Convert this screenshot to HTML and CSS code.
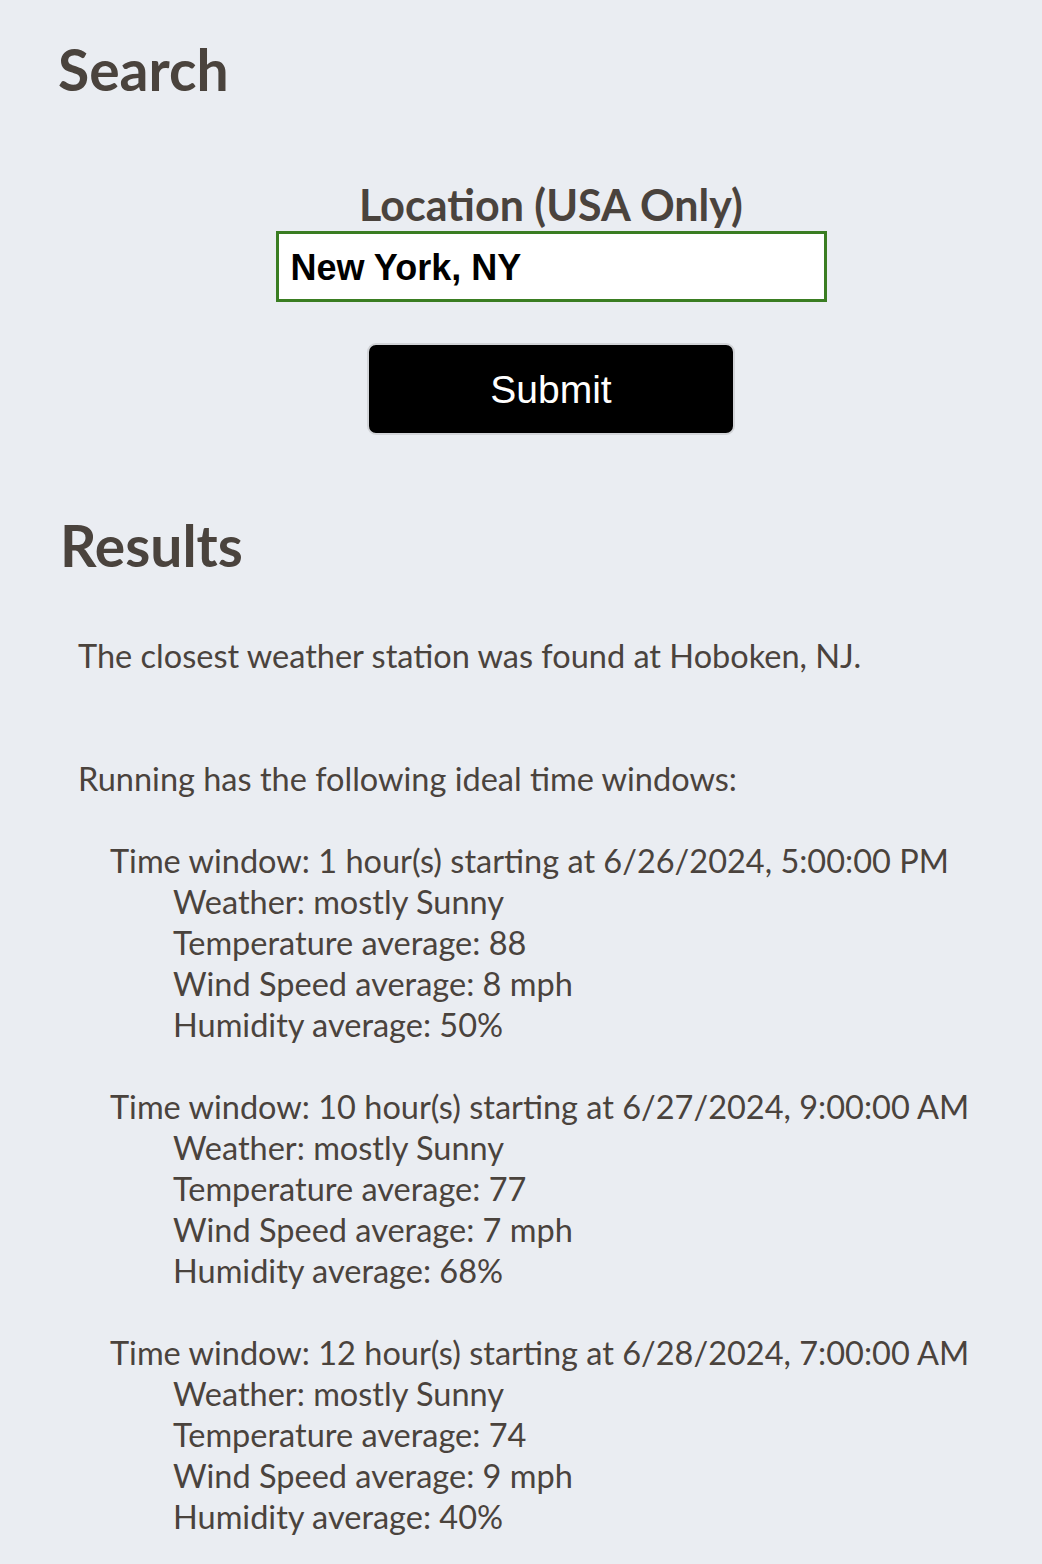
FILE: index.html
```html
<!DOCTYPE html>
<html lang="en">
<head>
<meta charset="utf-8">
<title>Weather Windows</title>
<link rel="stylesheet" href="styles.css">
</head>
<body>
<main class="page">
  <section class="search">
    <h1 class="title title-search">Search</h1>
    <form class="search-form">
      <label class="field-label" for="loc">Location (USA Only)</label>
      <input class="field-input" id="loc" type="text" value="New York, NY">
      <button class="submit" type="button">Submit</button>
    </form>
  </section>
  <section class="results">
    <h1 class="title">Results</h1>
    <div class="results-body">
      <p class="station">The closest weather station was found at Hoboken, NJ.</p>
      <p class="intro">Running has the following ideal time windows:</p>
      <ul class="windows">
        <li class="window">
          <div class="window-head">Time window: 1 hour(s) starting at 6/26/2024, 5:00:00 PM</div>
          <ul class="details">
            <li>Weather: mostly Sunny</li>
            <li>Temperature average: 88</li>
            <li>Wind Speed average: 8 mph</li>
            <li>Humidity average: 50%</li>
          </ul>
        </li>
        <li class="window">
          <div class="window-head">Time window: 10 hour(s) starting at 6/27/2024, 9:00:00 AM</div>
          <ul class="details">
            <li>Weather: mostly Sunny</li>
            <li>Temperature average: 77</li>
            <li>Wind Speed average: 7 mph</li>
            <li>Humidity average: 68%</li>
          </ul>
        </li>
        <li class="window">
          <div class="window-head">Time window: 12 hour(s) starting at 6/28/2024, 7:00:00 AM</div>
          <ul class="details">
            <li>Weather: mostly Sunny</li>
            <li>Temperature average: 74</li>
            <li>Wind Speed average: 9 mph</li>
            <li>Humidity average: 40%</li>
          </ul>
        </li>
      </ul>
    </div>
  </section>
</main>
</body>
</html>
```

FILE: styles.css
```css
html, body {
  margin: 0;
  padding: 0;
  background: #eaedf2;
}

body {
  font-family: Lato, "Open Sans", sans-serif;
  color: #4a433d;
}

.page {
  padding: 35px 0 40px 60px;
}

.title {
  margin: 0;
  font-size: 57px;
  font-weight: 700;
  line-height: 1.2;
  color: #4a433d;
}

.title-search {
  margin-left: -2px;
}

.search-form {
  display: flex;
  flex-direction: column;
  align-items: center;
  margin-top: 75px;
}

.field-label {
  font-size: 43px;
  font-weight: 700;
  line-height: 53px;
}

.field-input {
  box-sizing: border-box;
  width: 551px;
  height: 71px;
  margin: 0;
  padding: 2px 12px 0;
  border: 3px solid #3a7d22;
  border-radius: 0;
  background: #ffffff;
  color: #000000;
  font-family: "Liberation Sans", Arial, sans-serif;
  font-size: 36px;
  font-weight: 700;
  outline: none;
}

.submit {
  box-sizing: border-box;
  width: 368px;
  height: 92px;
  margin-top: 41px;
  border: 2px solid #d2d4d8;
  border-radius: 9px;
  background: #000000;
  color: #ffffff;
  font-family: "Liberation Sans", Arial, sans-serif;
  font-size: 39px;
  font-weight: 400;
  padding: 2px 0 0;
}

.results {
  margin-top: 76px;
}

.results-body {
  padding-left: 18px;
  font-size: 32.5px;
  line-height: 41px;
}

.station {
  margin: 55px 0 0;
}

.intro {
  margin: 82px 0 0;
}

.windows {
  list-style: none;
  margin: 41px 0 0;
  padding: 0 0 0 32px;
}

.window + .window {
  margin-top: 41px;
}

.details {
  list-style: none;
  margin: 0;
  padding: 0 0 0 63px;
}
```
